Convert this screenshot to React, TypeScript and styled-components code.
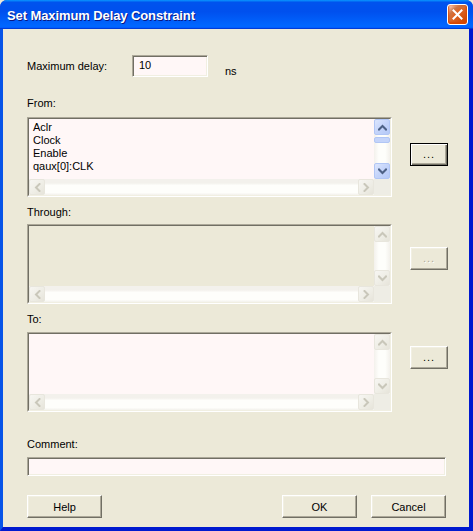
import React from "react"
import styled, { createGlobalStyle } from "styled-components"

const GlobalStyle = createGlobalStyle`
  html, body {
    margin: 0;
    padding: 0;
    background: #ECE9D8;
    overflow: hidden;
  }
  body {
    font-family: Tahoma, "Liberation Sans", Arial, sans-serif;
    font-size: 11px;
    color: #000;
  }
`

const Chevron = ({ dir, color }: { dir: "up" | "down" | "left" | "right"; color: string }) => {
  const rot = { up: 0, right: 90, down: 180, left: 270 }[dir]
  return (
    <svg width="9" height="9" viewBox="0 0 9 9" style={{ transform: `rotate(${rot}deg)` }}>
      <polyline points="1,6.5 4.5,3 8,6.5" fill="none" stroke={color} strokeWidth="2" strokeLinecap="square" />
    </svg>
  )
}

const ScrollArrow = ({ dir, enabled }: { dir: "up" | "down" | "left" | "right"; enabled?: boolean }) => (
  <ArrowBtn $enabled={!!enabled}>
    <Chevron dir={dir} color={enabled ? "#4D6185" : "#C9C7BA"} />
  </ArrowBtn>
)

type ListProps = {
  items?: string[]
  disabled?: boolean
  activeV?: boolean
}

const ListBox = ({ items = [], disabled, activeV }: ListProps) => (
  <Sunken>
    <ListGrid $disabled={!!disabled}>
      <Items>
        {items.map((it) => (
          <Item key={it}>{it}</Item>
        ))}
      </Items>
      <VScroll>
        <ScrollArrow dir="up" enabled={activeV} />
        <VTrack>{activeV && <Thumb />}</VTrack>
        <ScrollArrow dir="down" enabled={activeV} />
      </VScroll>
      <HScroll>
        <ScrollArrow dir="left" />
        <HTrack />
        <ScrollArrow dir="right" />
      </HScroll>
      <Corner />
    </ListGrid>
  </Sunken>
)

const App = () => {
  return (
    <>
      <GlobalStyle />
      <Window>
        <TitleBar>
          <Title>Set Maximum Delay Constraint</Title>
          <CloseBtn>
            <svg width="11" height="11" viewBox="0 0 11 11">
              <path d="M1.5 1.5 L9.5 9.5 M9.5 1.5 L1.5 9.5" stroke="#fff" strokeWidth="2" strokeLinecap="square" />
            </svg>
          </CloseBtn>
        </TitleBar>
        <Client>
          <DelayRow>
            <DelayLabel>Maximum delay:</DelayLabel>
            <TextInput $width={76} $height={22}>10</TextInput>
            <Units>ns</Units>
          </DelayRow>

          <Label $top={20} $gap={7}>From:</Label>
          <FieldRow>
            <ListBox items={["Aclr", "Clock", "Enable", "qaux[0]:CLK"]} activeV />
            <SideButton $top={26} $default>...</SideButton>
          </FieldRow>

          <Label $top={9} $gap={5}>Through:</Label>
          <FieldRow>
            <ListBox disabled />
            <SideButton $top={23} $disabled>...</SideButton>
          </FieldRow>

          <Label $top={9} $gap={6}>To:</Label>
          <FieldRow>
            <ListBox />
            <SideButton $top={14}>...</SideButton>
          </FieldRow>

          <Label $top={26} $gap={6}>Comment:</Label>
          <TextInput $width={419} $height={19} />

          <ButtonRow>
            <PushButton>Help</PushButton>
            <ButtonGroup>
              <PushButton>OK</PushButton>
              <PushButton>Cancel</PushButton>
            </ButtonGroup>
          </ButtonRow>
        </Client>
      </Window>
    </>
  )
}

export default App

const Window = styled.div`
  width: 473px;
  height: 531px;
  display: flex;
  flex-direction: column;
  background: #0831D9;
  border-radius: 7px 7px 0 0;
  overflow: hidden;
`
const TitleBar = styled.div`
  height: 29px;
  flex: none;
  display: flex;
  align-items: center;
  justify-content: space-between;
  padding: 0 5px 0 7px;
  box-sizing: border-box;
  background: linear-gradient(180deg, #0997ff, #0053ee 8%, #0050ee 40%, #0066ff 88%, #0066ff 93%, #005bff 95%, #003dd7 96%, #003dd7);
`
const Title = styled.div`
  color: #fff;
  font-family: "Liberation Sans", Arial, sans-serif;
  font-weight: bold;
  font-size: 13px;
  letter-spacing: -0.1px;
  text-shadow: 1px 1px #0a1883;
  margin-top: 1px;
`
const CloseBtn = styled.div`
  width: 21px;
  height: 21px;
  box-sizing: border-box;
  border: 1px solid #fff;
  border-radius: 3px;
  display: flex;
  align-items: center;
  justify-content: center;
  background: radial-gradient(circle at 90% 90%, #cc4600 0%, #dc6527 55%, #cd7546 70%, #ffccb2 90%, #fff 100%);
  box-shadow: inset 0 -1px 2px 1px #da4600;
`
const Client = styled.div`
  flex: 1;
  background: #ECE9D8;
  border-left: 3px solid #0754E8;
  border-right: 4px solid #0019CF;
  border-bottom: 4px solid #0019CF;
  padding: 26px 0 0 24px;
  display: flex;
  flex-direction: column;
  align-items: flex-start;
`
const DelayRow = styled.div`
  display: flex;
  align-items: center;
  height: 22px;
`
const DelayLabel = styled.div`
  width: 105px;
  line-height: 13px;
`
const Units = styled.div`
  align-self: flex-end;
  margin-left: 17px;
  margin-bottom: -1px;
  line-height: 13px;
`
const TextInput = styled.div<{ $width: number; $height: number }>`
  width: ${(p) => p.$width}px;
  height: ${(p) => p.$height}px;
  box-sizing: border-box;
  background: #FFF7F7;
  border: 1px solid;
  border-color: #ACA899 #FFFFFF #FFFFFF #ACA899;
  box-shadow: inset 1px 1px #716F64, inset -1px -1px #F1EFE2;
  padding: 3px 0 0 6px;
  line-height: 13px;
`
const Label = styled.div<{ $top: number; $gap: number }>`
  margin-top: ${(p) => p.$top}px;
  margin-bottom: ${(p) => p.$gap}px;
  line-height: 13px;
`
const FieldRow = styled.div`
  display: flex;
  align-items: flex-start;
`
const Sunken = styled.div`
  width: 365px;
  height: 80px;
  box-sizing: border-box;
  border: 1px solid;
  border-color: #ACA899 #FFFFFF #FFFFFF #ACA899;
`
const ListGrid = styled.div<{ $disabled: boolean }>`
  height: 100%;
  box-sizing: border-box;
  border: 1px solid;
  border-color: #716F64 #F1EFE2 #F1EFE2 #716F64;
  background: ${(p) => (p.$disabled ? "#ECE9D8" : "#FFF7F7")};
  display: grid;
  grid-template-columns: 1fr 16px;
  grid-template-rows: 1fr 16px;
`
const Items = styled.div`
  padding: 2px 0 0 4px;
  overflow: hidden;
`
const Item = styled.div`
  line-height: 13px;
  white-space: nowrap;
`
const VScroll = styled.div`
  display: flex;
  flex-direction: column;
  background: linear-gradient(90deg, #F3F1EC 0%, #FEFEFB 30%, #FEFEFB 70%, #F3F1EC 100%);
`
const VTrack = styled.div`
  flex: 1;
  padding-top: 2px;
`
const HScroll = styled.div`
  display: flex;
  background: linear-gradient(180deg, #F3F1EC 0%, #F3F1EC 25%, #FEFEFB 40%, #FEFEFB 85%, #F3F1EC 100%);
`
const HTrack = styled.div`
  flex: 1;
`
const Corner = styled.div`
  background: #EEEDE5;
`
const ArrowBtn = styled.div<{ $enabled: boolean }>`
  width: 16px;
  height: 16px;
  flex: none;
  box-sizing: border-box;
  border-radius: 2px;
  border: 1px solid ${(p) => (p.$enabled ? "#B1C6F5" : "#E8E6DD")};
  background: ${(p) =>
    p.$enabled
      ? "linear-gradient(135deg, #DCE6FD 0%, #C4D4FA 50%, #B5C9F7 100%)"
      : "linear-gradient(135deg, #F7F6F2 0%, #EEEDE5 60%, #E6E4DA 100%)"};
  display: flex;
  align-items: center;
  justify-content: center;
`
const Thumb = styled.div`
  height: 6px;
  box-sizing: border-box;
  border: 1px solid #B1C6F5;
  border-radius: 2px;
  background: #C4D4FA;
`
const SideButton = styled.div<{ $top: number; $default?: boolean; $disabled?: boolean }>`
  width: 38px;
  height: 23px;
  box-sizing: border-box;
  margin: ${(p) => p.$top}px 0 0 18px;
  display: flex;
  align-items: center;
  justify-content: center;
  padding-bottom: 2px;
  background: #ECE9D8;
  color: ${(p) => (p.$disabled ? "#ACA899" : "#000")};
  text-shadow: ${(p) => (p.$disabled ? "1px 1px #fff" : "none")};
  letter-spacing: 1px;
  border: 1px solid;
  border-color: ${(p) => (p.$default ? "#000" : "#FFF #716F64 #716F64 #FFF")};
  box-shadow: ${(p) =>
    p.$default
      ? "inset 1px 1px #FFF, inset -1px -1px #716F64, inset -2px -2px #ACA899"
      : "inset -1px -1px #ACA899, inset 1px 1px #F1EFE2"};
`
const ButtonRow = styled.div`
  width: 419px;
  margin-top: 19px;
  display: flex;
  justify-content: space-between;
`
const ButtonGroup = styled.div`
  display: flex;
  gap: 14px;
`
const PushButton = styled.div`
  width: 75px;
  height: 23px;
  box-sizing: border-box;
  display: flex;
  align-items: center;
  justify-content: center;
  background: #ECE9D8;
  border: 1px solid;
  border-color: #FFF #716F64 #716F64 #FFF;
  box-shadow: inset -1px -1px #ACA899, inset 1px 1px #F1EFE2;
`
